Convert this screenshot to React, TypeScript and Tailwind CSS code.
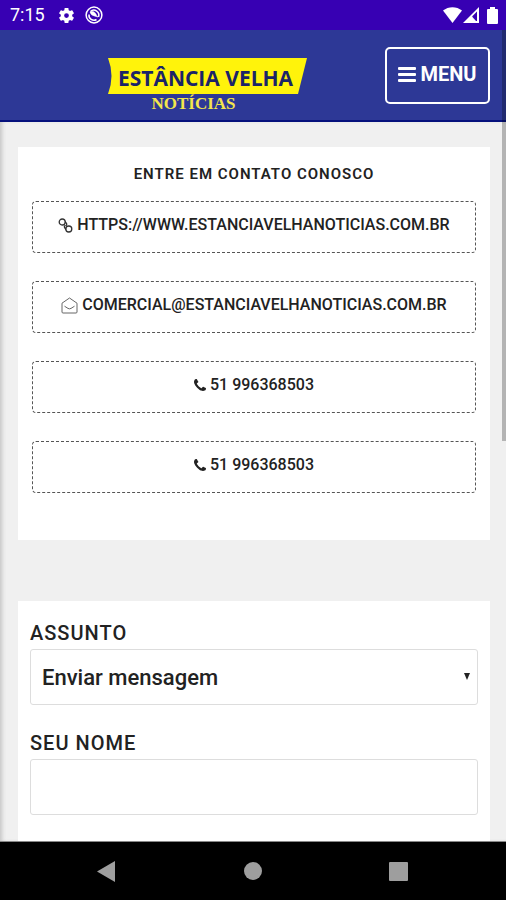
import React, { useState } from "react";

const contacts = [
  { icon: "link", text: "https://www.estanciavelhanoticias.com.br", href: "https://www.estanciavelhanoticias.com.br" },
  { icon: "mail", text: "comercial@estanciavelhanoticias.com.br", href: "mailto:comercial@estanciavelhanoticias.com.br" },
  { icon: "phone", text: "51 996368503", href: "tel:51996368503" },
  { icon: "phone", text: "51 996368503", href: "tel:51996368503" },
];

function ContactIcon({ name }: { name: string }) {
  if (name === "link") {
    return (
      <svg viewBox="0 0 15 15" className="w-[15px] h-[15px]" fill="none" stroke="#333" strokeWidth="1.3">
        <circle cx="4.200" cy="4" r="3" />
        <circle cx="10.800" cy="11" r="3" />
        <path d="M7 3.500 8.600 5.500q.6 1.600-.8 2.300M8 11.500 6.500 9.500q-.6-1.500.8-2.300" />
      </svg>
    );
  }
  if (name === "mail") {
    return (
      <svg viewBox="0 0 17 17" className="w-[17px] h-[17px]" fill="none" stroke="#666" strokeWidth="1">
        <path d="M1 6.2 8.5 1 16 6.2V15a1 1 0 0 1-1 1H2a1 1 0 0 1-1-1z" />
        <path d="M3.5 9.2 7 11.4q1.5.9 3 0l3.5-2.2" />
      </svg>
    );
  }
  return (
    <svg viewBox="0 0 1408 1408" className="w-3 h-3" fill="#222">
      <path d="M1408 1112q0 27-10 70.5t-21 68.5q-21 50-122 106-94 51-186 51-27 0-53-3.5t-57.5-12.5-47-14.5-55.5-20.5-49-18q-98-35-175-83-127-79-264-216t-216-264q-48-77-83-175-3-9-18-49t-20.5-55.5-14.5-47-12.5-57.5-3.5-53q0-92 51-186 56-101 106-122 25-11 68.5-21t70.5-10q14 0 21 3 18 6 53 76 11 19 30 54t35 63.5 31 53.5q3 4 17.5 25t21.5 35.5 7 28.5q0 20-28.5 50t-62 55-62 53-28.5 46q0 9 5 22.5t8.5 20.5 14 24 11.5 19q76 137 174 235t235 174q2 1 19 11.5t24 14 20.5 8.5 22.5 5q18 0 46-28.5t53-62 55-62 50-28.5q14 0 28.5 7t35.5 21.5 25 17.5q25 15 53.5 31t63.5 35 54 30q70 35 76 53 3 7 3 21z" />
    </svg>
  );
}

function StatusBar() {
  return (
    <div className="flex h-[30px] shrink-0 items-center justify-between bg-[#3700b3] pl-[10px] pr-2 text-white">
      <div className="flex items-center gap-3">
        <span className="text-lg leading-none">7:15</span>
        <div className="flex items-center gap-[9px]">
          <svg viewBox="0 0 24 24" className="h-[19px] w-[19px]" fill="currentColor">
            <path d="M19.14 12.94c.04-.3.06-.61.06-.94 0-.32-.02-.64-.07-.94l2.03-1.58c.18-.14.23-.41.12-.61l-1.92-3.32c-.12-.22-.37-.29-.59-.22l-2.39.96c-.5-.38-1.03-.7-1.62-.94l-.36-2.54c-.04-.24-.24-.41-.48-.41h-3.84c-.24 0-.43.17-.47.41l-.36 2.54c-.59.24-1.13.57-1.62.94l-2.39-.96c-.22-.08-.47 0-.59.22L2.74 8.87c-.12.21-.08.47.12.61l2.03 1.58c-.05.3-.09.63-.09.94s.02.64.07.94l-2.03 1.58c-.18.14-.23.41-.12.61l1.92 3.32c.12.22.37.29.59.22l2.39-.96c.5.38 1.03.7 1.62.94l.36 2.54c.05.24.24.41.48.41h3.84c.24 0 .44-.17.47-.41l.36-2.54c.59-.24 1.13-.56 1.62-.94l2.39.96c.22.08.47 0 .59-.22l1.92-3.32c.12-.22.07-.47-.12-.61zM12 15a3 3 0 1 1 0-6 3 3 0 0 1 0 6z" />
          </svg>
          <svg viewBox="0 0 18 18" className="h-[18px] w-[18px]" fill="none" stroke="currentColor">
            <circle cx="9" cy="9" r="7.900" strokeWidth="1.500" />
            <path d="M5.500 5.500a5 5 0 0 1 8 5.500M4 8.500a5 5 0 0 0 7.500 5" strokeWidth="1.500" />
            <path d="M5 6c3-1.500 4.500 0 5.500 1.500S12 10.500 13 11L9.500 10Q6 9.500 5 6z" fill="currentColor" strokeWidth=".6" />
          </svg>
        </div>
      </div>
      <div className="flex items-center">
        <svg viewBox="0 0 19 16" className="h-4 w-[19px]" fill="currentColor">
          <path d="M0 3.600C5.500-1 13.500-1 19 3.600L9.500 16z" />
        </svg>
        <svg viewBox="0 0 16 16" className="mr-2 ml-px h-4 w-4">
          <path d="M0 16 16 0v16z" fill="currentColor" />
          <path d="M9 9.500v4.500h5V4.500z" fill="#3700b3" />
          <path d="M9 9.500 13 14H9z" fill="currentColor" />
        </svg>
        <svg viewBox="0 0 11 17" className="h-[17px] w-[11px]" fill="currentColor">
          <path d="M3 0h5v2h2a1 1 0 0 1 1 1v13a1 1 0 0 1-1 1H1a1 1 0 0 1-1-1V3a1 1 0 0 1 1-1h2z" />
        </svg>
      </div>
    </div>
  );
}

function Header() {
  return (
    <header className="flex h-[92px] shrink-0 items-start justify-end border-b-2 border-[#05107c] bg-[#2d3896] pt-[17px] pr-4">
      <a href="#" className="mt-[11px] mr-[78px] flex w-[199px] flex-col items-center">
        <span className="relative flex h-9 w-full items-center justify-center">
          <svg viewBox="0 0 199 36" className="absolute inset-0 h-full w-full">
            <path d="M0 0h199l-9 36H0Q7 18 0 0z" fill="#fff30b" />
          </svg>
          <span className="relative pt-1 pr-1 font-['Open_Sans'] text-[21px] leading-7 font-bold text-[#1b2468]">ESTÂNCIA VELHA</span>
        </span>
        <span className="pr-7 font-['Liberation_Serif'] text-[17px] leading-[19px] font-bold text-[#f3e64c]">NOTÍCIAS</span>
      </a>
      <button className="flex h-[57px] w-[105px] items-start justify-center gap-1 rounded-[5px] border-2 border-white pt-[13px] text-xl leading-6 font-bold text-white">
        <svg viewBox="0 0 18 16" className="mt-1 h-4 w-[18px]" fill="currentColor">
          <rect y="1" width="18" height="3" rx="1" />
          <rect y="7" width="18" height="3" rx="1" />
          <rect y="13" width="18" height="3" rx="1" />
        </svg>
        MENU
      </button>
    </header>
  );
}

export default function App() {
  const [subject, setSubject] = useState("Enviar mensagem");
  const [name, setName] = useState("");

  return (
    <div className="relative flex h-screen flex-col overflow-hidden bg-[#f0f0f0] font-[Roboto,sans-serif] text-[#222]">
      <StatusBar />
      <Header />

      <main className="min-h-0 flex-1 overflow-hidden pt-[25px] pr-4 pl-[18px] shadow-[inset_4px_0_4px_-2px_#c4c4c4]">
        <section className="bg-white px-[14px] pt-[17px] pb-[47px]">
          <h1 className="mb-[17px] text-center text-[15px] leading-5 font-semibold tracking-[1px]">ENTRE EM CONTATO CONOSCO</h1>
          <ul className="flex flex-col gap-7">
            {contacts.map((item, i) => (
              <li key={i}>
                <a
                  href={item.href}
                  className="flex h-[52px] items-start justify-center gap-1 rounded-[4px] border border-dashed border-[#555] pt-[13px] text-base leading-5 font-medium uppercase"
                >
                  <span className="flex h-5 items-center">
                    <ContactIcon name={item.icon} />
                  </span>
                  {item.text}
                </a>
              </li>
            ))}
          </ul>
        </section>

        <form className="mt-[61px] bg-white px-3 pt-5 pb-10" onSubmit={(e) => e.preventDefault()}>
          <label htmlFor="subject" className="mb-1 block text-xl leading-6 font-medium tracking-[1px]">
            ASSUNTO
          </label>
          <div className="relative mb-[26px]">
            <select
              id="subject"
              value={subject}
              onChange={(e) => setSubject(e.target.value)}
              className="block h-14 w-full appearance-none rounded-[3px] border border-[#ddd] bg-white px-[11px] text-[22px] font-medium"
            >
              <option>Enviar mensagem</option>
            </select>
            <svg viewBox="0 0 6 7" className="pointer-events-none absolute top-6 right-2 h-[7px] w-[6px]" fill="#222">
              <path d="M0 0h6L3 7z" />
            </svg>
          </div>
          <label htmlFor="name" className="mb-1 block text-xl leading-6 font-medium tracking-[1px]">
            SEU NOME
          </label>
          <input
            id="name"
            type="text"
            value={name}
            onChange={(e) => setName(e.target.value)}
            className="block h-14 w-full rounded-[3px] border border-[#ddd] bg-white px-[11px] text-[22px] font-medium"
          />
        </form>
      </main>

      {/* scroll thumb lies over the header and the page */}
      <div className="absolute top-[30px] right-0 h-[411px] w-1 bg-black/25" />

      <nav className="grid h-[59px] shrink-0 grid-cols-[1fr_80px_1fr] items-center border-t border-[#888] bg-black text-[#9e9e9e]">
        <button aria-label="Voltar" className="mr-[98px] justify-self-end">
          <svg viewBox="0 0 18 21" className="h-[21px] w-[18px]" fill="currentColor">
            <path d="M18 0v21L0 10.500z" />
          </svg>
        </button>
        <button aria-label="Início" className="justify-self-center">
          <svg viewBox="0 0 18 18" className="h-[18px] w-[18px]" fill="currentColor">
            <circle cx="9" cy="9" r="9" />
          </svg>
        </button>
        <button aria-label="Recentes" className="ml-24 justify-self-start">
          <svg viewBox="0 0 19 19" className="h-[19px] w-[19px]" fill="currentColor">
            <rect width="19" height="19" rx="1" />
          </svg>
        </button>
      </nav>
    </div>
  );
}
